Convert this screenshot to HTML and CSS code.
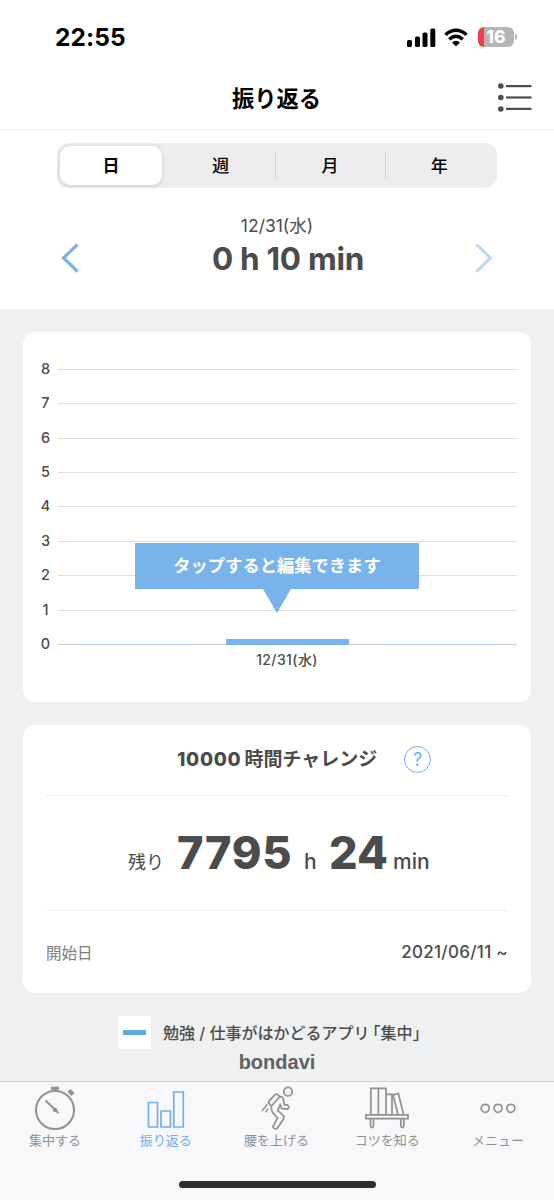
FILE: index.html
```html
<!DOCTYPE html>
<html lang="ja">
<head>
  <meta charset="UTF-8" />
  <meta name="viewport" content="width=device-width, initial-scale=1.0" />
  <title>振り返る</title>
  <link rel="stylesheet" href="styles.css">
</head>
<body>
  <div class="status-bar">
    <span class="time">22:55</span>
    <div class="status-icons">
      <svg class="signal" width="29" height="19" viewBox="0 0 29 19">
        <rect x="0" y="12" width="5" height="7" rx="1.6"/>
        <rect x="8" y="8.5" width="5" height="10.5" rx="1.6"/>
        <rect x="15.5" y="4.5" width="5" height="14.5" rx="1.6"/>
        <rect x="23.3" y="0.5" width="5" height="18.5" rx="1.6"/>
      </svg>
      <svg class="wifi" width="24" height="19" viewBox="0 0 24 19">
        <path d="M1.4 6.8 Q12 -2.4 22.6 6.8 M5.2 11.2 Q12 5.2 18.8 11.2" fill="none" stroke="#000" stroke-width="3.3"/>
        <path d="M8 14.4 Q12 11.2 16 14.4 L12 18.6 Z"/>
      </svg>
      <div class="battery"><span>16</span></div>
    </div>
  </div>

  <header class="header">
    <h1>振り返る</h1>
    <svg class="list-icon" width="34" height="30" viewBox="0 0 34 30">
      <g fill="#4d4d4d">
        <circle cx="2.8" cy="3" r="2.8"/><circle cx="2.8" cy="14.5" r="2.8"/><circle cx="2.8" cy="26" r="2.8"/>
        <rect x="8" y="2" width="25.5" height="2.2"/><rect x="8" y="13.4" width="25.5" height="2.2"/><rect x="8" y="24.8" width="25.5" height="2.2"/>
      </g>
    </svg>
  </header>

  <section class="summary">
    <div class="segments">
      <button class="segment active">日</button>
      <button class="segment">週</button>
      <button class="segment divided">月</button>
      <button class="segment divided">年</button>
    </div>
    <div class="period">
      <svg width="18" height="30" viewBox="0 0 18 30"><path d="M16.5 1.5 L2.5 15 L16.5 28.5" fill="none" stroke="#78b3ea" stroke-width="3.2"/></svg>
      <div class="period-text">
        <div class="date">12/31(水)</div>
        <div class="total">0 h 10 min</div>
      </div>
      <svg width="18" height="30" viewBox="0 0 18 30"><path d="M1.5 1.5 L15.5 15 L1.5 28.5" fill="none" stroke="#c0daf5" stroke-width="3.2"/></svg>
    </div>
  </section>

  <main class="content">
    <section class="card chart-card">
      <div class="chart">
        <div class="grid-row"><span>8</span><i></i></div>
        <div class="grid-row"><span>7</span><i></i></div>
        <div class="grid-row"><span>6</span><i></i></div>
        <div class="grid-row"><span>5</span><i></i></div>
        <div class="grid-row"><span>4</span><i></i></div>
        <div class="grid-row"><span>3</span><i></i></div>
        <div class="grid-row"><span>2</span><i></i></div>
        <div class="grid-row"><span>1</span><i></i></div>
        <div class="grid-row zero"><span>0</span><i></i></div>
        <div class="bars">
          <div class="bar empty"></div>
          <div class="bar" style="height: 6.5px"></div>
          <div class="bar empty"></div>
        </div>
        <div class="tooltip">タップすると編集できます</div>
      </div>
      <div class="bar-label">12/31(水)</div>
    </section>

    <section class="card challenge">
      <div class="challenge-title">
        <h2><span class="ten-thousand">10000</span>時間チャレンジ</h2>
        <span class="help">?</span>
      </div>
      <div class="remaining">
        <span class="rest">残り</span>
        <span class="big">7795</span>
        <span class="unit hour">h</span>
        <span class="big minutes">24</span>
        <span class="unit">min</span>
      </div>
      <div class="start">
        <span class="start-label">開始日</span>
        <span class="start-date">2021/06/11 ~</span>
      </div>
    </section>

    <div class="promo">
      <span class="promo-icon"></span>
      <span class="promo-text">勉強 / 仕事がはかどるアプリ<span class="quote">「集中」</span></span>
    </div>
    <div class="brand">bondavi</div>
  </main>

  <nav class="tabs">
    <a class="tab">
      <svg width="44" height="46" viewBox="0 0 44 46">
        <circle cx="22" cy="24" r="19" stroke-width="2"/>
        <path d="M18 2.2 h8 M22 2 v3" stroke-width="3"/>
        <path d="M36 4.5 l4 4" stroke-width="4"/>
        <path d="M12.5 14.5 L25.5 27" stroke-width="2"/>
        <circle cx="22" cy="24" r="1.3"/>
      </svg>
      <span>集中する</span>
    </a>
    <a class="tab selected">
      <svg width="44" height="46" viewBox="0 0 44 46">
        <path d="M4.5 16.5 h9 v24.5 h-9 z M17 25 h9.5 v16 h-9.5 z M29.8 6 h9.5 v35 h-9.5 z"/>
      </svg>
      <span>振り返る</span>
    </a>
    <a class="tab">
      <svg width="44" height="46" viewBox="0 0 44 46">
        <circle cx="34" cy="5.7" r="4.3"/>
        <path d="M17.5 20 L25.2 11.2 Q28.3 9.6 29.2 12.8 L30.3 18.6 L33.2 18.8 Q36 21 33.5 23.2 L27.6 22.6 L26.2 18.2 L23.8 24.6 L29.4 29.6 Q30.6 31 29.5 33 L23.6 42 Q20.6 44.3 18.8 40.6 L23.6 32 L18.6 26.4 Q16.6 23 17.5 20" stroke-linejoin="round"/>
        <path d="M17.3 19.8 L14.8 17.2 Q14.4 15.8 15.4 14.6 L20.8 8.8 Q22.2 7.6 23.6 8.4 L25.6 10.4"/>
        <path d="M13.3 18.3 L8 25 M14.3 22.6 L11.4 26.4" stroke-width="1.5"/>
      </svg>
      <span>腰を上げる</span>
    </a>
    <a class="tab">
      <svg width="44" height="46" viewBox="0 0 44 46">
        <path d="M5.8 28.5 V2.4 H21 V28.5 M13.4 2.4 V28.5 M21 8.4 H27 V28.5 M33 28.5 L28 8.9 L33.4 7.6 L38.5 28.5"/>
        <path d="M1 28.9 H43 V32.7 H1 z M5.5 32.7 V40 Q7 43.4 8.5 40 V32.7 M35.8 32.7 V40 Q37.3 43.4 38.8 40 V32.7"/>
      </svg>
      <span>コツを知る</span>
    </a>
    <a class="tab">
      <svg width="44" height="46" viewBox="0 0 44 46">
        <circle cx="9.2" cy="22.3" r="4"/><circle cx="22" cy="22.3" r="4"/><circle cx="34.8" cy="22.3" r="4"/>
      </svg>
      <span>メニュー</span>
    </a>
    <div class="home-indicator"></div>
  </nav>
</body>
</html>
```
FILE: styles.css
```css
* {
  box-sizing: border-box;
}

body {
  margin: 0;
  width: 554px;
  height: 1200px;
  overflow: hidden;
  display: flex;
  flex-direction: column;
  font-family: Inter, "Noto Sans CJK JP", sans-serif;
  color: #4b4b4b;
  background: #eff0f2;
}

h1,
h2 {
  margin: 0;
}

/* ステータスバー */
.status-bar {
  height: 74px;
  padding: 0 40px 0 55px;
  display: flex;
  justify-content: space-between;
  align-items: center;
  background: #fff;
  color: #000;
}

.time {
  font-size: 24.5px;
  font-weight: 700;
  letter-spacing: 0.1px;
}

.status-icons {
  display: flex;
  align-items: center;
}

.signal {
  margin-right: -1px;
}

.wifi {
  margin: 0 10px 0 9px;
}

.battery {
  position: relative;
  width: 36px;
  height: 20px;
  border-radius: 6px;
  background: linear-gradient(90deg, #f53b48 6px, #b5b5b5 6px);
  color: #fff;
  font-size: 17.5px;
  font-weight: 800;
  line-height: 20px;
  text-align: center;
}

.battery::after {
  content: '';
  position: absolute;
  right: -3px;
  top: 7px;
  width: 2px;
  height: 6px;
  border-radius: 0 2px 2px 0;
  background: #b5b5b5;
}

/* ヘッダー */
.header {
  height: 56px;
  padding-right: 22px;
  display: grid;
  grid-template-columns: 1fr auto 1fr;
  align-items: center;
  background: #fff;
  border-bottom: 1px solid #ececee;
}

.header h1 {
  grid-column: 2;
  margin-left: 21px;
  font-size: 22.3px;
  line-height: 30px;
  margin-top: -6px;
  color: #000;
}

.list-icon {
  justify-self: end;
  margin-top: -8px;
}

.summary {
  height: 179px;
  padding: 13px 57px 0;
  background: #fff;
}

.segments {
  height: 45px;
  padding: 3px;
  display: grid;
  grid-template-columns: 106px 1fr 1fr 1fr;
  background: #ededef;
  border-radius: 12px;
}

.segment {
  position: relative;
  padding: 0 0 2px;
  border: 0;
  background: none;
  font: 500 17px Inter, "Noto Sans CJK JP", sans-serif;
  color: #000;
}

.segment.active {
  width: 102px;
  background: #fff;
  border-radius: 10px;
  box-shadow: 0 1px 5px rgba(0, 0, 0, 0.14);
  font-weight: 700;
}

.segment.divided::before {
  content: '';
  position: absolute;
  left: 0;
  top: 6px;
  width: 1px;
  height: 27px;
  background: #d2d2d5;
}

.period {
  display: flex;
  justify-content: space-between;
  align-items: flex-end;
  padding: 0 4px;
  height: 85px;
}

.period-text {
  height: 59px;
  text-align: center;
}

.date {
  font-size: 17.5px;
  line-height: 24px;
}

.total {
  padding-top: 1px;
  padding-left: 22px;
  font-size: 31.5px;
  font-weight: 700;
  line-height: 40px;
  letter-spacing: -0.3px;
}

.content {
  flex: 1;
  padding: 23px 23px 0;
}

.card {
  background: #fff;
  border-radius: 12px;
}

/* グラフ */
.chart-card {
  height: 370px;
  padding: 20px 14px 0 17px;
}

.chart {
  position: relative;
}

.grid-row {
  height: 34.45px;
  display: flex;
  align-items: center;
  gap: 7px;
}

.grid-row span {
  width: 11px;
  margin-top: -2px;
  font-size: 14.5px;
  font-weight: 500;
  text-align: center;
}

.grid-row i {
  flex: 1;
  height: 1px;
  background: #dfdfdf;
}

.grid-row.zero i {
  background: #cfcfcf;
}

.bars {
  position: absolute;
  left: 34px;
  right: 16px;
  bottom: 16.5px;
  display: flex;
  justify-content: space-between;
  align-items: flex-end;
}

.bar {
  width: 123px;
  background: #78b4eb;
}

.bar.empty {
  height: 1px;
  background: #b5d4f3;
}

.tooltip {
  position: absolute;
  left: 95px;
  top: 191px;
  width: 284px;
  height: 46px;
  background: #78b4eb;
  color: #fff;
  font-size: 17.3px;
  font-weight: 700;
  line-height: 46px;
  text-align: center;
}

.tooltip::after {
  content: '';
  position: absolute;
  left: 128px;
  top: 46px;
  border: 14px solid transparent;
  border-top: 24px solid #78b4eb;
  border-bottom: 0;
}

.bar-label {
  margin-top: -12px;
  padding-left: 17px;
  font-size: 14px;
  font-weight: 500;
  line-height: 20px;
  letter-spacing: 0.4px;
  text-align: center;
}

/* 10000時間チャレンジ */
.challenge {
  height: 268px;
  margin-top: 23px;
  padding: 0 23px 0 22px;
}

.challenge-title {
  height: 71px;
  padding: 0 0 1px 132px;
  display: flex;
  align-items: center;
  border-bottom: 1px solid #f0f0f1;
}

.challenge-title h2 {
  width: 227px;
  font-size: 19px;
  line-height: 28px;
  white-space: nowrap;
}

.ten-thousand {
  margin-right: 3px;
  font-weight: 800;
  letter-spacing: 0.7px;
}

.help {
  width: 27px;
  height: 27px;
  border: 1.3px solid #6fadf0;
  border-radius: 50%;
  color: #6fadf0;
  font-size: 18px;
  line-height: 25px;
  text-align: center;
}

.remaining {
  height: 115px;
  padding: 0 0 0 83px;
  display: flex;
  align-items: baseline;
  line-height: 114px;
  border-bottom: 1px solid #f0f0f1;
}

.rest {
  width: 49px;
  font-size: 18px;
}

.big {
  width: 127px;
  font-size: 45px;
  font-weight: 800;
  letter-spacing: 0.7px;
}

.big.minutes {
  width: 64px;
  letter-spacing: 0;
}

.unit {
  font-size: 21px;
  font-weight: 500;
}

.hour {
  width: 25px;
}

.start {
  height: 82px;
  display: flex;
  justify-content: space-between;
  align-items: center;
  font-size: 15.5px;
}

.start-label {
  padding-left: 1px;
  color: #7d7d7d;
}

.start-date {
  font-size: 17px;
  font-weight: 500;
  letter-spacing: 0.3px;
}

/* フッター */
.promo {
  display: flex;
  align-items: center;
  gap: 12px;
  margin: 23px 0 0 95px;
  height: 33px;
  font-size: 16px;
  font-weight: 500;
  white-space: nowrap;
}

.promo-text {
  margin-top: -2px;
}

.quote {
  margin-left: -5px;
}

.promo-icon {
  width: 33px;
  height: 33px;
  border: solid #fff;
  border-width: 14px 5px;
  background: #5aa9e8;
}

.brand {
  font-family: "Liberation Sans", sans-serif;
  font-size: 20px;
  font-weight: 700;
  line-height: 27px;
  text-align: center;
  color: #606164;
}

/* タブバー */
.tabs {
  position: relative;
  height: 119px;
  display: grid;
  grid-template-columns: repeat(5, 1fr);
  background: #f8f8fa;
  border-top: 1px solid #cfcfd1;
}

.tab {
  display: flex;
  flex-direction: column;
  align-items: center;
  padding: 4px 1px 0 0;
  color: #919191;
  font-size: 13px;
  line-height: 17px;
}

.tab svg {
  fill: none;
  stroke: #919191;
  stroke-width: 1.7;
}

.tab.selected {
  color: #6fb0ee;
}

.tab.selected svg {
  stroke: #6fb0ee;
}

.home-indicator {
  position: absolute;
  left: 179px;
  bottom: 12px;
  width: 197px;
  height: 7px;
  border-radius: 4px;
  background: #2d2d2f;
}
```
